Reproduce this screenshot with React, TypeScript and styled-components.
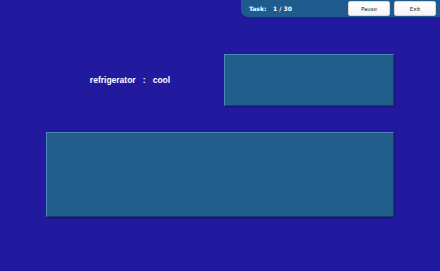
import React from 'react';
import styled, { createGlobalStyle } from 'styled-components';

const GlobalStyle = createGlobalStyle`
  html, body {
    margin: 0;
    padding: 0;
    background: #221a9e;
  }
  body {
    font-family: "DejaVu Sans", "Liberation Sans", sans-serif;
  }
`;

const Page = styled.div`
  width: 440px;
  height: 271px;
  background: #221a9e;
  display: flex;
  flex-direction: column;
  overflow: hidden;
`;

const TopBar = styled.div`
  align-self: flex-end;
  width: 199px;
  height: 17px;
  box-sizing: border-box;
  background: #1f5b8c;
  border-bottom-left-radius: 7px;
  display: flex;
  align-items: center;
  padding: 0 4px 0 8px;
  color: #fff;
  font-size: 6px;
  font-weight: bold;
`;

const TaskLabel = styled.span`
  width: 24px;
`;

const TaskCount = styled.span`
  flex: 1;
`;

const Button = styled.button`
  width: 42px;
  height: 15px;
  margin-left: 4px;
  padding: 0;
  box-sizing: border-box;
  background: linear-gradient(#ffffff, #f4f4f4);
  border: 1px solid #d6d6d6;
  border-radius: 2px;
  font-family: "DejaVu Sans", sans-serif;
  font-size: 5.5px;
  color: #222;
`;

const Content = styled.div`
  display: flex;
  flex-direction: column;
  padding: 37px 46px 0 46px;
`;

const Row = styled.div`
  display: flex;
  align-items: center;
`;

const Prompt = styled.div`
  flex: 1;
  display: flex;
  justify-content: center;
  padding-right: 10px;
  color: #fff;
  font-family: "Liberation Sans", Arial, sans-serif;
  font-size: 8.5px;
  font-weight: bold;
  white-space: pre;
`;

const Field = styled.div<{ w: number; h: number }>`
  width: ${p => p.w}px;
  height: ${p => p.h}px;
  box-sizing: border-box;
  background: #215e8c;
  border-top: 1px solid #4d86bd;
  border-left: 1px solid #4d86bd;
  border-bottom: 1px solid #173f6c;
  border-right: 1px solid #173f6c;
  box-shadow: 1px 1px 1px rgba(10, 20, 60, 0.5);
`;

export default function App() {
  return (
    <Page>
      <GlobalStyle />
      <TopBar>
        <TaskLabel>Task:</TaskLabel>
        <TaskCount>1 / 30</TaskCount>
        <Button>Pause</Button>
        <Button>Exit</Button>
      </TopBar>
      <Content>
        <Row>
          <Prompt>{'refrigerator   :   cool'}</Prompt>
          <Field w={170} h={52} />
        </Row>
        <Row style={{ marginTop: 26 }}>
          <Field w={348} h={85} />
        </Row>
      </Content>
    </Page>
  );
}
